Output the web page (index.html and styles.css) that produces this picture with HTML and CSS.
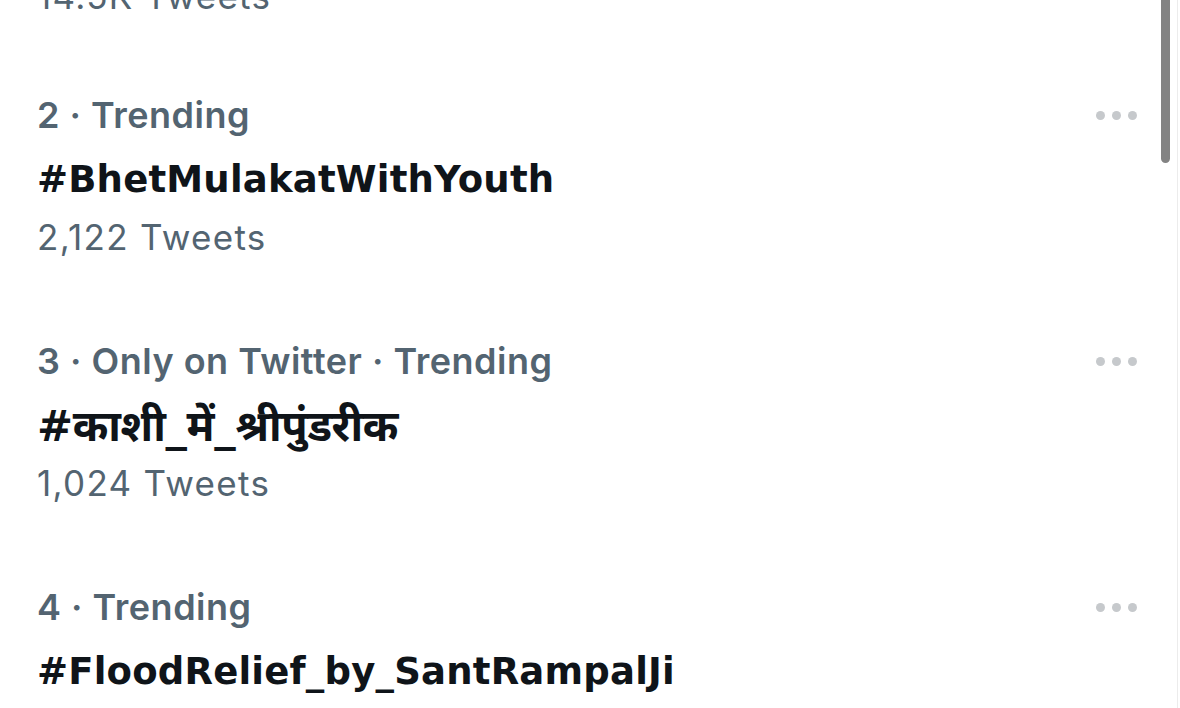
FILE: index.html
```html
<!DOCTYPE html>
<html lang="en">
<head>
  <meta charset="UTF-8" />
  <meta name="viewport" content="width=device-width, initial-scale=1.0"/>
  <title>Trends</title>
  <link rel="stylesheet" href="styles.css">
</head>
<body>

<div id="trends">
  <div class="trend">
    <div class="trend-meta">1 · Trending</div>
    <div class="trend-name">#Trending</div>
    <div class="trend-count">14.5K Tweets</div>
  </div>

  <div class="trend">
    <div class="trend-top">
      <div class="trend-meta">2 · Trending</div>
      <div class="more"><span></span><span></span><span></span></div>
    </div>
    <div class="trend-name">#BhetMulakatWithYouth</div>
    <div class="trend-count">2,122 Tweets</div>
  </div>

  <div class="trend">
    <div class="trend-top">
      <div class="trend-meta">3 · Only on Twitter · Trending</div>
      <div class="more"><span></span><span></span><span></span></div>
    </div>
    <div class="trend-name deva">#काशी_में_श्रीपुंडरीक</div>
    <div class="trend-count">1,024 Tweets</div>
  </div>

  <div class="trend">
    <div class="trend-top">
      <div class="trend-meta">4 · Trending</div>
      <div class="more"><span></span><span></span><span></span></div>
    </div>
    <div class="trend-name">#FloodRelief_by_SantRampalJi</div>
    <div class="trend-count">5,860 Tweets</div>
  </div>
</div>

<!-- scrollbar thumb -->
<div id="scroll-thumb"></div>
<div id="edge"></div>

</body>
</html>
```

FILE: styles.css
```css
body {
  font-family: Inter, "Noto Sans Devanagari", "Noto Sans", sans-serif;
  margin: 0;
  background: #ffffff;
  overflow: hidden;
  height: 708px;
}

#trends {
  margin-top: -175px;
  padding-left: 37px;
  padding-right: 42px;
}

.trend {
  height: 246px;
  box-sizing: border-box;
  padding-top: 28px;
}

/* first row is scrolled mostly out of view */
.trend:first-child {
  height: 240px;
  padding-top: 27px;
}

.trend-top {
  display: flex;
  justify-content: space-between;
  align-items: center;
}

.trend-meta {
  font-size: 36px;
  line-height: 44px;
  font-weight: 600;
  color: #536471;
  letter-spacing: 0.5px;
}

.trend-name {
  margin-top: 13px;
  font-family: "DejaVu Sans", "Noto Sans Devanagari", sans-serif;
  font-size: 37px;
  line-height: 60px;
  font-weight: 700;
  color: #0f1419;
  letter-spacing: 0.2px;
}

.trend-name.deva {
  font-size: 43px;
  letter-spacing: -0.4px;
}

.trend-count {
  margin-top: 7px;
  font-size: 35px;
  line-height: 40px;
  color: #536471;
  letter-spacing: 1.3px;
}

.more {
  display: flex;
  gap: 7px;
  margin-right: 1px;
}

.more span {
  width: 9px;
  height: 9px;
  border-radius: 50%;
  background: #c6c9cc;
}

#scroll-thumb {
  position: fixed;
  top: -10px;
  left: 1161px;
  width: 9px;
  height: 173px;
  border-radius: 5px;
  background: #838383;
}

#edge {
  position: fixed;
  top: 0;
  bottom: 0;
  left: 1177px;
  width: 1px;
  background: #ececec;
}
```
